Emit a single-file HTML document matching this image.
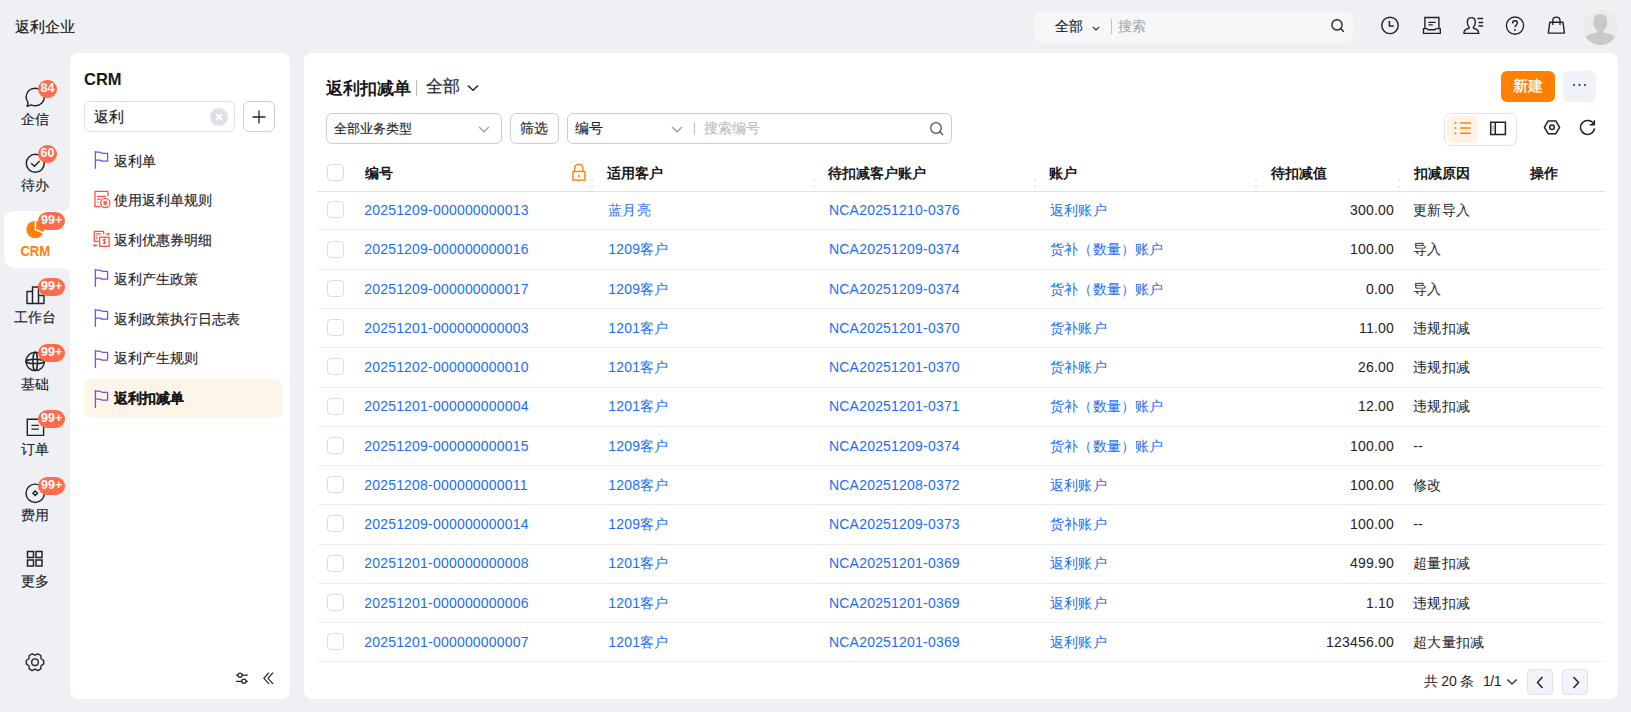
<!DOCTYPE html>
<html><head><meta charset="utf-8">
<style>
*{box-sizing:border-box;margin:0;padding:0}
html,body{width:1631px;height:712px;overflow:hidden;background:#eff0f3;font-family:"Liberation Sans",sans-serif;color:#1f2329;font-size:14px}
.abs{position:absolute}
svg{position:absolute;overflow:visible}
#brand{left:15px;top:17px;font-size:15px;line-height:20px;color:#181818}
#gsearch{left:1034px;top:11px;width:319px;height:32px;background:#f6f7f9;border-radius:8px}
#gsearch .all{position:absolute;left:21px;top:5px;line-height:20px;font-size:14px;color:#1f2329}
#gsearch .sep{position:absolute;left:77px;top:8px;width:1px;height:15px;background:#bfc3ca}
#gsearch .ph{position:absolute;left:84px;top:5px;line-height:20px;font-size:14px;color:#a0a4ab}
#avatar{left:1583px;top:9.5px;width:35px;height:35px;border-radius:50%;background:#ebebeb;overflow:hidden}
.lb{position:absolute;left:0;width:70px;text-align:center;font-size:14px;line-height:18px;color:#1f2329}
.badge{position:absolute;left:38px;height:18px;min-width:18px;padding:0 3px;border-radius:9px;background:#ff6b4b;color:#fff;font-size:12.5px;line-height:16.6px;font-weight:bold;text-align:center}
#crmact{left:4px;top:211px;width:80px;height:57px;background:#fff;border-radius:10px}
#side{left:70px;top:53px;width:220px;height:646px;background:#fff;border-radius:8px}
#main{left:304px;top:53px;width:1314px;height:646px;background:#fff;border-radius:8px}
#sidetitle{left:84px;top:68px;font-size:16.5px;line-height:22px;font-weight:bold;color:#181818}
#sinput{left:84px;top:101px;width:151px;height:31px;border:1px solid #dcdfe6;border-radius:6px}
#sinput .v{position:absolute;left:9px;top:5px;line-height:20px;font-size:15px;color:#1f2329}
#sinput .clr{position:absolute;left:125px;top:5.5px;width:18px;height:18px;border-radius:50%;background:#dcdfe6}
#splus{left:243px;top:101px;width:32px;height:31px;border:1px solid #c9cdd4;border-radius:6px}
#sact{left:84px;top:379px;width:198px;height:39px;background:#fdf6e8;border-radius:7px}
.mi{position:absolute;left:114px;font-size:14px;line-height:20px;color:#1f2329;white-space:nowrap}
.th{position:absolute;top:163px;font-size:14px;font-weight:bold;line-height:20px;color:#181818;white-space:nowrap}
.hl{position:absolute;left:317px;width:1288px;height:1px;background:#eceef2}
.hl.hd{background:#dfe2e8}
.cb{position:absolute;left:327px;width:17px;height:17px;border:1px solid #d9dce6;border-radius:4px;background:#fff}
.td{position:absolute;font-size:14px;line-height:20px;white-space:nowrap;color:#1f2329;letter-spacing:0.2px}
.lk{color:#1b6ef3}
.num{text-align:right;width:140px;letter-spacing:0.2px;margin-right:-0.2px}
#ptitle{left:326px;top:77px;font-size:16.5px;line-height:22px;font-weight:bold;color:#181818}
#psep{left:416px;top:80px;width:1px;height:16px;background:#b8bcc4}
#pall{left:426px;top:76px;font-size:17px;line-height:22px;color:#1f2329}
#btnnew{left:1501px;top:71px;width:54px;height:31px;border-radius:6px;background:#ff7f00;color:#fff;font-size:14.5px;-webkit-text-stroke:0.3px #fff;line-height:31px;text-align:center}
#btnmore{left:1563px;top:71px;width:33px;height:31px;border-radius:6px;background:#eff2f9}
.box{position:absolute;border:1px solid #c9cdd6;border-radius:6px;background:#fff}
.box .tx{position:absolute;top:4px;line-height:20px;font-size:14px;color:#1f2329;white-space:nowrap}
#vtog{left:1444px;top:113px;width:73px;height:33px;border:1px solid #dfe2ea;border-radius:7px}
#vact{left:1447px;top:116px;width:31px;height:27px;border-radius:6px;background:#fff4e3}
.pg{position:absolute;top:669px;width:26px;height:26px;border:1px solid #dde1e8;border-radius:4px;background:#f2f4f9}

.mi,.lb,#brand,#pall,.box .tx,#gsearch .all,#sinput .v{-webkit-text-stroke:0.15px currentColor}

</style></head><body>
<div id="brand" class="abs">返利企业</div>
<div id="gsearch" class="abs"><span class="all">全部</span><span class="sep"></span><span class="ph">搜索</span>
<svg style="left:58px;top:14.5px" width="8" height="5" viewBox="0 0 8 5"><path d="M0.8 0.8 L4 4 L7.2 0.8" fill="none" stroke="#1f2329" stroke-width="1.1"/></svg>
<svg style="left:296px;top:7px" width="16" height="16" viewBox="0 0 16 16"><circle cx="7" cy="6.9" r="5.1" fill="none" stroke="#1f2329" stroke-width="1.4"/><path d="M10.6 10.6 L13.8 13.8" stroke="#1f2329" stroke-width="1.4"/></svg>
</div>
<!-- header icons -->
<svg style="left:1380px;top:16px" width="20" height="20" viewBox="0 0 20 20"><circle cx="10" cy="9.4" r="8.2" fill="none" stroke="#1f2329" stroke-width="1.4"/><path d="M9.4 5 V10.1 H13.8" fill="none" stroke="#1f2329" stroke-width="1.5"/></svg>
<svg style="left:1422px;top:16px" width="20" height="20" viewBox="0 0 20 20"><path d="M2.9 12.4 V1.5 H16.9 V12.4" fill="none" stroke="#1f2329" stroke-width="1.4"/><path d="M6.3 6.4 H13.7 M6.3 8.9 H10.7" stroke="#1f2329" stroke-width="1.4"/><path d="M1.5 12.6 H5 L5.8 13.7 H13.1 L13.9 12.6 H18.3 V17.4 H1.5 Z" fill="none" stroke="#1f2329" stroke-width="1.4" stroke-linejoin="round"/></svg>
<svg style="left:1463px;top:16px" width="22" height="20" viewBox="0 0 22 20"><path d="M0.9 17.4 C0.9 14.6 2.8 13.1 5.4 12.5 C6.2 12.3 6.5 11.7 6 11 C4.9 9.8 4.3 8.2 4.3 6.3 C4.3 3.4 6.1 1.6 8.3 1.6 C10.5 1.6 12.3 3.4 12.3 6.3 C12.3 8.2 11.7 9.8 10.6 11 C10.1 11.7 10.4 12.3 11.2 12.5 C13.8 13.1 15.7 14.6 15.7 17.4 Z" fill="none" stroke="#1f2329" stroke-width="1.4" stroke-linejoin="round"/><path d="M14.4 2.5 H20.1 M15.6 6.4 H20.1 M15.6 10.1 H20.1" stroke="#1f2329" stroke-width="1.5"/></svg>
<svg style="left:1505px;top:16px" width="20" height="20" viewBox="0 0 20 20"><circle cx="10" cy="9.6" r="8.6" fill="none" stroke="#1f2329" stroke-width="1.35"/><path d="M7.6 7.4 C7.6 5.8 8.6 4.8 10 4.8 C11.4 4.8 12.4 5.7 12.4 7.1 C12.4 8.9 10 9.3 10 11.3" fill="none" stroke="#1f2329" stroke-width="1.4"/><circle cx="10" cy="14" r="0.95" fill="#1f2329"/></svg>
<svg style="left:1547px;top:16px" width="20" height="20" viewBox="0 0 20 20"><path d="M5.8 9 V4.6 C5.8 2.4 7.1 1.1 9.4 1.1 C11.7 1.1 13 2.4 13 4.6 V9" fill="none" stroke="#1f2329" stroke-width="1.35"/><path d="M2.8 6.3 H16 L17.4 17.1 H1.3 Z" fill="none" stroke="#1f2329" stroke-width="1.4" stroke-linejoin="round"/></svg>
<div id="avatar" class="abs"><svg style="left:0;top:0" width="35" height="35" viewBox="0 0 35 35"><path d="M17.4 4.3 C12.5 4.3 10.6 7.5 10.6 11 L10.6 13.5 C10.1 13.8 10.1 15 10.9 15.4 C11.6 17.6 12.8 19.6 14.5 21 L14.5 22.6 C10 23.2 6 24.5 3.3 26.5 L0 35 H35 L31.5 26.5 C28.8 24.5 24.8 23.2 20.3 22.6 L20.3 21 C22 19.6 23.2 17.6 23.9 15.4 C24.7 15 24.7 13.8 24.2 13.5 L24.2 11 C24.2 7.5 22.3 4.3 17.4 4.3 Z" fill="#c9c9c9"/></svg></div>

<!-- left nav -->
<div id="crmact" class="abs"></div>
<svg style="left:62px;top:203px" width="8" height="8" viewBox="0 0 8 8"><path d="M0 8 H8 V0 C8 4.4 4.4 8 0 8 Z" fill="#fff"/></svg>
<svg style="left:62px;top:268px" width="8" height="8" viewBox="0 0 8 8"><path d="M0 0 H8 V8 C8 3.6 4.4 0 0 0 Z" fill="#fff"/></svg>

<svg style="left:25px;top:87px" width="20" height="20" viewBox="0 0 20 20"><path d="M2.2 19.2 L3.1 15.3 C1.8 13.8 1.1 12 1.1 10 C1.1 5 5.1 1.2 10.2 1.2 C15.2 1.2 19.3 5 19.3 10 C19.3 15 15.2 18.8 10.2 18.8 C8.9 18.8 7.6 18.4 6.4 17.9 Z" fill="none" stroke="#1f2329" stroke-width="1.45" stroke-linejoin="round"/></svg>
<div class="badge" style="top:79.5px;width:19px;padding:0">84</div>
<div class="lb" style="top:110px">企信</div>

<svg style="left:25px;top:153px" width="20" height="20" viewBox="0 0 20 20"><circle cx="10.3" cy="10.3" r="9" fill="none" stroke="#1f2329" stroke-width="1.45"/><path d="M6.2 10.2 L9.4 13.2 L14.6 8" fill="none" stroke="#1f2329" stroke-width="1.45"/></svg>
<div class="badge" style="top:145px;width:19px;padding:0">60</div>
<div class="lb" style="top:176px">待办</div>

<svg style="left:26px;top:220px" width="19" height="19" viewBox="0 0 19 19"><circle cx="9.2" cy="9.5" r="8.8" fill="#ff7f0a"/><path d="M9.4 0.5 V9.6 L17.8 13" fill="none" stroke="#fff" stroke-width="1.5"/></svg>
<div class="badge" style="top:212px;width:27px">99+</div>
<div class="abs" style="left:0;top:241.5px;width:70.6px;text-align:center;color:#ff7f0a;font-weight:bold;font-size:15px;line-height:18px;transform:scaleX(0.87)">CRM</div>

<svg style="left:26px;top:286px" width="20" height="19" viewBox="0 0 20 19"><path d="M1 17.5 V5.5 H6.5 V17.5 Z M6.5 17.5 V1 H12.5 V17.5 Z M12.5 17.5 V9.5 H18 V17.5 Z" fill="none" stroke="#1f2329" stroke-width="1.45" stroke-linejoin="round"/></svg>
<div class="badge" style="top:278px;width:27px">99+</div>
<div class="lb" style="top:308px">工作台</div>

<svg style="left:25px;top:351px" width="21" height="21" viewBox="0 0 21 21"><circle cx="10.2" cy="10.4" r="9.2" fill="none" stroke="#1f2329" stroke-width="1.45"/><ellipse cx="10.2" cy="10.4" rx="2.3" ry="9.2" fill="none" stroke="#1f2329" stroke-width="1.5"/><ellipse cx="10.2" cy="10.4" rx="9.2" ry="2.1" fill="none" stroke="#1f2329" stroke-width="1.5"/></svg>
<div class="badge" style="top:344px;width:27px">99+</div>
<div class="lb" style="top:374.5px">基础</div>

<svg style="left:26px;top:418px" width="20" height="20" viewBox="0 0 20 20"><path d="M1.3 1.3 H17.6 V17.4 H1.3 Z" fill="none" stroke="#1f2329" stroke-width="1.4"/><path d="M5.5 7.4 H12.9 M5.5 11.1 H12.9" stroke="#1f2329" stroke-width="1.4"/></svg>
<div class="badge" style="top:410px;width:27px">99+</div>
<div class="lb" style="top:440px">订单</div>

<svg style="left:25px;top:483px" width="21" height="21" viewBox="0 0 21 21"><circle cx="10.2" cy="10.3" r="9.2" fill="none" stroke="#1f2329" stroke-width="1.45"/><path d="M10.2 8 L12.5 10.3 L10.2 12.6 L7.9 10.3 Z" fill="none" stroke="#1f2329" stroke-width="1.4"/></svg>
<div class="badge" style="top:476.5px;width:27px">99+</div>
<div class="lb" style="top:506px">费用</div>

<svg style="left:26px;top:550px" width="19" height="19" viewBox="0 0 19 19"><path d="M1.5 1.5 H7.5 V7.5 H1.5 Z M10 1.5 H16 V7.5 H10 Z M1.5 10 H7.5 V16 H1.5 Z M10 10 H16 V16 H10 Z" fill="none" stroke="#1f2329" stroke-width="1.5"/></svg>
<div class="lb" style="top:572px">更多</div>

<svg style="left:25px;top:652px" width="20" height="20" viewBox="0 0 20 20"><path d="M18.70 8.50 L18.70 11.90 L16.06 13.70 L15.82 16.88 L12.88 18.58 L10.00 17.20 L7.12 18.58 L4.18 16.88 L3.94 13.70 L1.30 11.90 L1.30 8.50 L3.94 6.70 L4.18 3.52 L7.12 1.82 L10.00 3.20 L12.88 1.82 L15.82 3.52 L16.06 6.70 Z" fill="none" stroke="#1f2329" stroke-width="1.35" stroke-linejoin="round"/><circle cx="10" cy="10.2" r="3.3" fill="none" stroke="#1f2329" stroke-width="1.35"/></svg>

<!-- sidebar -->
<div id="side" class="abs"></div>
<div id="sidetitle" class="abs">CRM</div>
<div id="sinput" class="abs"><span class="v">返利</span><span class="clr"><svg style="left:5px;top:5px" width="8" height="8" viewBox="0 0 8 8"><path d="M1 1 L7 7 M7 1 L1 7" stroke="#fff" stroke-width="1.8"/></svg></span></div>
<div id="splus" class="abs"><svg style="left:7px;top:7px" width="16" height="16" viewBox="0 0 16 16"><path d="M8 1.6 V14.4 M1.6 8 H14.4" stroke="#1f2329" stroke-width="1.3"/></svg></div>
<div id="sact" class="abs"></div>
<!--FLAGS-->
<svg style="left:94px;top:150px" width="16" height="20" viewBox="0 0 16 20"><path d="M1.4 1 V18.8" stroke="#7a4de9" stroke-width="1.3"/><path d="M1.4 2.2 H5.6 C7 2.2 7.2 3.4 8.6 3.4 H13.6 V11.2 H8.6 C7.2 11.2 7 10.1 5.6 10.1 H1.4" fill="none" stroke="#7a4de9" stroke-width="1.3" stroke-linejoin="round"/></svg>
<svg style="left:94px;top:268px" width="16" height="20" viewBox="0 0 16 20"><path d="M1.4 1 V18.8" stroke="#7a4de9" stroke-width="1.3"/><path d="M1.4 2.2 H5.6 C7 2.2 7.2 3.4 8.6 3.4 H13.6 V11.2 H8.6 C7.2 11.2 7 10.1 5.6 10.1 H1.4" fill="none" stroke="#7a4de9" stroke-width="1.3" stroke-linejoin="round"/></svg>
<svg style="left:94px;top:308px" width="16" height="20" viewBox="0 0 16 20"><path d="M1.4 1 V18.8" stroke="#7a4de9" stroke-width="1.3"/><path d="M1.4 2.2 H5.6 C7 2.2 7.2 3.4 8.6 3.4 H13.6 V11.2 H8.6 C7.2 11.2 7 10.1 5.6 10.1 H1.4" fill="none" stroke="#7a4de9" stroke-width="1.3" stroke-linejoin="round"/></svg>
<svg style="left:94px;top:348.5px" width="16" height="20" viewBox="0 0 16 20"><path d="M1.4 1 V18.8" stroke="#7a4de9" stroke-width="1.3"/><path d="M1.4 2.2 H5.6 C7 2.2 7.2 3.4 8.6 3.4 H13.6 V11.2 H8.6 C7.2 11.2 7 10.1 5.6 10.1 H1.4" fill="none" stroke="#7a4de9" stroke-width="1.3" stroke-linejoin="round"/></svg>
<svg style="left:94px;top:389px" width="16" height="20" viewBox="0 0 16 20"><path d="M1.4 1 V18.8" stroke="#7a4de9" stroke-width="1.3"/><path d="M1.4 2.2 H5.6 C7 2.2 7.2 3.4 8.6 3.4 H13.6 V11.2 H8.6 C7.2 11.2 7 10.1 5.6 10.1 H1.4" fill="none" stroke="#7a4de9" stroke-width="1.3" stroke-linejoin="round"/></svg>
<svg style="left:94px;top:190px" width="18" height="18" viewBox="0 0 18 18"><path d="M6.8 16.7 H1 V1.3 H14 V6" fill="none" stroke="#f5563d" stroke-width="1.3" stroke-linejoin="round"/><path d="M3.5 6.4 H11.3 M3.5 9.2 H6.2" stroke="#f5563d" stroke-width="1.3" stroke-linecap="round"/><circle cx="3.9" cy="12.2" r="0.8" fill="#f5563d"/><circle cx="11.3" cy="13" r="4.6" fill="#fff" stroke="#f5563d" stroke-width="1.3"/><path d="M9.6 10.8 L11.3 12.6 L13 10.8 M9.4 12.9 H13.2 M9.4 14.3 H13.2 M11.3 12.6 V15.6" fill="none" stroke="#f5563d" stroke-width="1.1"/></svg>
<svg style="left:92px;top:229px" width="19" height="19" viewBox="0 0 19 19"><path d="M6.8 12.4 H2.3 V2.3 H11.7 V5.2" fill="none" stroke="#f5563d" stroke-width="1.3" stroke-linejoin="round"/><path d="M4.6 4.9 H8.4 M4.6 7 H5.4 M4.6 9.2 H5.4" stroke="#f5563d" stroke-width="1.2" stroke-linecap="round"/><rect x="7.6" y="8.3" width="9.5" height="9" fill="#fff" stroke="#f5563d" stroke-width="1.3"/><path d="M13.6 5 H17 M15.8 3.9 L17.2 5 L15.8 6.1 M5.6 16.4 H2 M3.3 15.3 L1.9 16.4 L3.3 17.5" fill="none" stroke="#f5563d" stroke-width="1.1"/><path d="M13.7 10.9 C13.2 10.3 12.6 10.2 12.2 10.3 C11.2 10.5 11.1 11.9 12.3 12.4 C13.6 12.9 13.7 14.3 12.5 14.6 C11.9 14.7 11.4 14.5 11 14.1 M12.4 9.6 V15.3" fill="none" stroke="#f5563d" stroke-width="1.1"/></svg>
<div class="mi" style="top:151px">返利单</div>
<div class="mi" style="top:190px">使用返利单规则</div>
<div class="mi" style="top:230px">返利优惠券明细</div>
<div class="mi" style="top:269px">返利产生政策</div>
<div class="mi" style="top:309px">返利政策执行日志表</div>
<div class="mi" style="top:348px">返利产生规则</div>
<div class="mi" style="top:388px;font-weight:bold;color:#181818">返利扣减单</div>
<svg style="left:234px;top:670px" width="16" height="14" viewBox="0 0 16 14"><path d="M2 5.2 H13.8 M2 11.3 H13.8" stroke="#1f2329" stroke-width="1.3"/><circle cx="6" cy="5.2" r="2.1" fill="#fff" stroke="#1f2329" stroke-width="1.3"/><circle cx="9.9" cy="11.3" r="2.1" fill="#fff" stroke="#1f2329" stroke-width="1.3"/></svg>
<svg style="left:262px;top:671px" width="13" height="14" viewBox="0 0 13 14"><path d="M6.9 1.7 L1.9 7.3 L6.9 12.9 M11 1.7 L6 7.3 L11 12.9" fill="none" stroke="#1f2329" stroke-width="1.2"/></svg>

<!-- main -->
<div id="main" class="abs"></div>
<div id="ptitle" class="abs">返利扣减单</div>
<div id="psep" class="abs"></div>
<div id="pall" class="abs">全部</div>
<svg style="left:467px;top:84px" width="12" height="8" viewBox="0 0 12 8"><path d="M1 1.5 L6 6.3 L11 1.5" fill="none" stroke="#1f2329" stroke-width="1.5"/></svg>
<div id="btnnew" class="abs">新建</div>
<div id="btnmore" class="abs"><svg style="left:9px;top:12.2px" width="15" height="4" viewBox="0 0 15 4"><circle cx="2" cy="2" r="1" fill="#1f2329"/><circle cx="7.5" cy="2" r="1" fill="#1f2329"/><circle cx="13" cy="2" r="1" fill="#1f2329"/></svg></div>

<div class="box" style="left:326px;top:113px;width:176px;height:31px"><span class="tx" style="left:7px;font-size:13px;top:4.5px">全部业务类型</span>
<svg style="left:151px;top:12px" width="12" height="7" viewBox="0 0 12 7"><path d="M1 1 L6 5.8 L11 1" fill="none" stroke="#9ea3ab" stroke-width="1.4"/></svg></div>
<div class="box" style="left:510px;top:113px;width:49px;height:31px"><span class="tx" style="left:9px">筛选</span></div>
<div class="box" style="left:567px;top:113px;width:385px;height:31px"><span class="tx" style="left:7px">编号</span>
<svg style="left:103px;top:12px" width="12" height="7" viewBox="0 0 12 7"><path d="M1 1 L6 5.8 L11 1" fill="none" stroke="#9ea3ab" stroke-width="1.4"/></svg>
<span style="position:absolute;left:126px;top:8px;width:1px;height:13px;background:#b8bcc4"></span>
<span class="tx" style="left:136px;color:#b9bdc5">搜索编号</span>
<svg style="left:361px;top:7px" width="16" height="16" viewBox="0 0 16 16"><circle cx="7" cy="7" r="5.3" fill="none" stroke="#4a4f57" stroke-width="1.3"/><path d="M10.8 10.8 L14 14" stroke="#4a4f57" stroke-width="1.3"/></svg></div>

<div id="vtog" class="abs"></div>
<div id="vact" class="abs"></div>
<svg style="left:1453px;top:121px" width="19" height="14" viewBox="0 0 19 14"><circle cx="2.4" cy="1.9" r="1" fill="#ff7f0a"/><circle cx="2.4" cy="7" r="1" fill="#ff7f0a"/><circle cx="2.4" cy="12.2" r="1" fill="#ff7f0a"/><path d="M7.2 1.9 H17.8 M7.2 7 H17.8 M7.2 12.2 H17.8" stroke="#ff7f0a" stroke-width="1.5"/></svg>
<svg style="left:1489px;top:120px" width="18" height="16" viewBox="0 0 18 16"><path d="M1.7 2.3 H16.4 V14.6 H1.7 Z M6.3 2.3 V14.6" fill="none" stroke="#1f2329" stroke-width="1.5"/><path d="M4 5.5 V6.3 M4 7.6 V8.4 M4 9.7 V10.5" stroke="#1f2329" stroke-width="1.1"/></svg>
<svg style="left:1543px;top:119px" width="18" height="17" viewBox="0 0 18 17"><path d="M5.2 1.9 H12.8 L16.6 8.3 L12.8 14.7 H5.2 L1.4 8.3 Z" fill="none" stroke="#1f2329" stroke-width="1.5" stroke-linejoin="round"/><circle cx="9" cy="8.3" r="2.3" fill="none" stroke="#1f2329" stroke-width="1.5"/></svg>
<svg style="left:1579px;top:119px" width="17" height="17" viewBox="0 0 17 17"><path d="M14.8 5.3 A7 7 0 1 0 15.5 9.3" fill="none" stroke="#1f2329" stroke-width="1.5"/><path d="M15.3 1.2 V5.8 H10.8" fill="none" stroke="#1f2329" stroke-width="1.5"/></svg>

<div class="th" style="left:365px">编号</div>
<svg style="left:571px;top:163px" width="16" height="19" viewBox="0 0 16 19"><path d="M3.6 8 V5.2 C3.6 2.9 5.2 1.4 7.8 1.4 C10.4 1.4 11.9 2.9 11.9 5.2 V8" fill="none" stroke="#ff7f0a" stroke-width="1.4"/><rect x="1.9" y="8.5" width="12" height="8.6" fill="none" stroke="#ff7f0a" stroke-width="1.4"/><path d="M7.8 11.5 V14" stroke="#ff7f0a" stroke-width="1.5"/></svg>
<div class="th" style="left:607px">适用客户</div>
<div class="th" style="left:828px">待扣减客户账户</div>
<div class="th" style="left:1049px">账户</div>
<div class="th" style="left:1271px">待扣减值</div>
<div class="th" style="left:1414px">扣减原因</div>
<div class="th" style="left:1530px">操作</div>
<div class="cb" style="top:164px"></div>
<div class="abs" style="left:591px;top:179px;width:2px;height:2px;background:#e3e8f5"></div><div class="abs" style="left:591px;top:186px;width:2px;height:2px;background:#e3e8f5"></div><div class="abs" style="left:813px;top:179px;width:2px;height:2px;background:#e3e8f5"></div><div class="abs" style="left:813px;top:186px;width:2px;height:2px;background:#e3e8f5"></div><div class="abs" style="left:1034px;top:179px;width:2px;height:2px;background:#e3e8f5"></div><div class="abs" style="left:1034px;top:186px;width:2px;height:2px;background:#e3e8f5"></div><div class="abs" style="left:1255px;top:179px;width:2px;height:2px;background:#e3e8f5"></div><div class="abs" style="left:1255px;top:186px;width:2px;height:2px;background:#e3e8f5"></div><div class="abs" style="left:1398px;top:179px;width:2px;height:2px;background:#e3e8f5"></div><div class="abs" style="left:1398px;top:186px;width:2px;height:2px;background:#e3e8f5"></div>
<div class="hl hd" style="top:191px"></div>
<div class="cb" style="top:201.4px"></div>
<div class="td lk" style="left:364.2px;top:200.20px">20251209-000000000013</div>
<div class="td lk" style="left:608.3px;top:200.20px">蓝月亮</div>
<div class="td lk" style="left:829px;top:200.20px">NCA20251210-0376</div>
<div class="td lk" style="left:1050px;top:200.20px">返利账户</div>
<div class="td num" style="left:1254px;top:200.20px">300.00</div>
<div class="td" style="left:1413.2px;top:200.20px">更新导入</div>
<div class="hl" style="top:229px"></div>
<div class="cb" style="top:240.7px"></div>
<div class="td lk" style="left:364.2px;top:239.45px">20251209-000000000016</div>
<div class="td lk" style="left:608.3px;top:239.45px">1209客户</div>
<div class="td lk" style="left:829px;top:239.45px">NCA20251209-0374</div>
<div class="td lk" style="left:1050px;top:239.45px">货补（数量）账户</div>
<div class="td num" style="left:1254px;top:239.45px">100.00</div>
<div class="td" style="left:1413.2px;top:239.45px">导入</div>
<div class="hl" style="top:269px"></div>
<div class="cb" style="top:279.9px"></div>
<div class="td lk" style="left:364.2px;top:278.70px">20251209-000000000017</div>
<div class="td lk" style="left:608.3px;top:278.70px">1209客户</div>
<div class="td lk" style="left:829px;top:278.70px">NCA20251209-0374</div>
<div class="td lk" style="left:1050px;top:278.70px">货补（数量）账户</div>
<div class="td num" style="left:1254px;top:278.70px">0.00</div>
<div class="td" style="left:1413.2px;top:278.70px">导入</div>
<div class="hl" style="top:308px"></div>
<div class="cb" style="top:319.1px"></div>
<div class="td lk" style="left:364.2px;top:317.95px">20251201-000000000003</div>
<div class="td lk" style="left:608.3px;top:317.95px">1201客户</div>
<div class="td lk" style="left:829px;top:317.95px">NCA20251201-0370</div>
<div class="td lk" style="left:1050px;top:317.95px">货补账户</div>
<div class="td num" style="left:1254px;top:317.95px">11.00</div>
<div class="td" style="left:1413.2px;top:317.95px">违规扣减</div>
<div class="hl" style="top:347px"></div>
<div class="cb" style="top:358.4px"></div>
<div class="td lk" style="left:364.2px;top:357.20px">20251202-000000000010</div>
<div class="td lk" style="left:608.3px;top:357.20px">1201客户</div>
<div class="td lk" style="left:829px;top:357.20px">NCA20251201-0370</div>
<div class="td lk" style="left:1050px;top:357.20px">货补账户</div>
<div class="td num" style="left:1254px;top:357.20px">26.00</div>
<div class="td" style="left:1413.2px;top:357.20px">违规扣减</div>
<div class="hl" style="top:387px"></div>
<div class="cb" style="top:397.6px"></div>
<div class="td lk" style="left:364.2px;top:396.45px">20251201-000000000004</div>
<div class="td lk" style="left:608.3px;top:396.45px">1201客户</div>
<div class="td lk" style="left:829px;top:396.45px">NCA20251201-0371</div>
<div class="td lk" style="left:1050px;top:396.45px">货补（数量）账户</div>
<div class="td num" style="left:1254px;top:396.45px">12.00</div>
<div class="td" style="left:1413.2px;top:396.45px">违规扣减</div>
<div class="hl" style="top:426px"></div>
<div class="cb" style="top:436.9px"></div>
<div class="td lk" style="left:364.2px;top:435.70px">20251209-000000000015</div>
<div class="td lk" style="left:608.3px;top:435.70px">1209客户</div>
<div class="td lk" style="left:829px;top:435.70px">NCA20251209-0374</div>
<div class="td lk" style="left:1050px;top:435.70px">货补（数量）账户</div>
<div class="td num" style="left:1254px;top:435.70px">100.00</div>
<div class="td" style="left:1413.2px;top:435.70px">--</div>
<div class="hl" style="top:465px"></div>
<div class="cb" style="top:476.1px"></div>
<div class="td lk" style="left:364.2px;top:474.95px">20251208-000000000011</div>
<div class="td lk" style="left:608.3px;top:474.95px">1208客户</div>
<div class="td lk" style="left:829px;top:474.95px">NCA20251208-0372</div>
<div class="td lk" style="left:1050px;top:474.95px">返利账户</div>
<div class="td num" style="left:1254px;top:474.95px">100.00</div>
<div class="td" style="left:1413.2px;top:474.95px">修改</div>
<div class="hl" style="top:504px"></div>
<div class="cb" style="top:515.4px"></div>
<div class="td lk" style="left:364.2px;top:514.20px">20251209-000000000014</div>
<div class="td lk" style="left:608.3px;top:514.20px">1209客户</div>
<div class="td lk" style="left:829px;top:514.20px">NCA20251209-0373</div>
<div class="td lk" style="left:1050px;top:514.20px">货补账户</div>
<div class="td num" style="left:1254px;top:514.20px">100.00</div>
<div class="td" style="left:1413.2px;top:514.20px">--</div>
<div class="hl" style="top:544px"></div>
<div class="cb" style="top:554.6px"></div>
<div class="td lk" style="left:364.2px;top:553.45px">20251201-000000000008</div>
<div class="td lk" style="left:608.3px;top:553.45px">1201客户</div>
<div class="td lk" style="left:829px;top:553.45px">NCA20251201-0369</div>
<div class="td lk" style="left:1050px;top:553.45px">返利账户</div>
<div class="td num" style="left:1254px;top:553.45px">499.90</div>
<div class="td" style="left:1413.2px;top:553.45px">超量扣减</div>
<div class="hl" style="top:583px"></div>
<div class="cb" style="top:593.9px"></div>
<div class="td lk" style="left:364.2px;top:592.70px">20251201-000000000006</div>
<div class="td lk" style="left:608.3px;top:592.70px">1201客户</div>
<div class="td lk" style="left:829px;top:592.70px">NCA20251201-0369</div>
<div class="td lk" style="left:1050px;top:592.70px">返利账户</div>
<div class="td num" style="left:1254px;top:592.70px">1.10</div>
<div class="td" style="left:1413.2px;top:592.70px">违规扣减</div>
<div class="hl" style="top:622px"></div>
<div class="cb" style="top:633.1px"></div>
<div class="td lk" style="left:364.2px;top:631.95px">20251201-000000000007</div>
<div class="td lk" style="left:608.3px;top:631.95px">1201客户</div>
<div class="td lk" style="left:829px;top:631.95px">NCA20251201-0369</div>
<div class="td lk" style="left:1050px;top:631.95px">返利账户</div>
<div class="td num" style="left:1254px;top:631.95px">123456.00</div>
<div class="td" style="left:1413.2px;top:631.95px">超大量扣减</div>
<div class="hl" style="top:661px"></div>

<div class="td" style="left:1423.5px;top:671px;letter-spacing:-0.1px">共 20 条</div>
<div class="td" style="left:1483px;top:671px;letter-spacing:-0.5px">1/1</div>
<svg style="left:1505.5px;top:677.5px" width="12" height="8" viewBox="0 0 12 8"><path d="M1.2 1.5 L6 6 L10.8 1.5" fill="none" stroke="#1f2329" stroke-width="1.25"/></svg>
<div class="pg" style="left:1527px"><svg style="left:8px;top:6px" width="8" height="13" viewBox="0 0 8 13"><path d="M6.5 1 L1.5 6.5 L6.5 12" fill="none" stroke="#1f2329" stroke-width="1.5"/></svg></div>
<div class="pg" style="left:1562px"><svg style="left:9px;top:6px" width="8" height="13" viewBox="0 0 8 13"><path d="M1.5 1 L6.5 6.5 L1.5 12" fill="none" stroke="#1f2329" stroke-width="1.5"/></svg></div>

</body></html>
